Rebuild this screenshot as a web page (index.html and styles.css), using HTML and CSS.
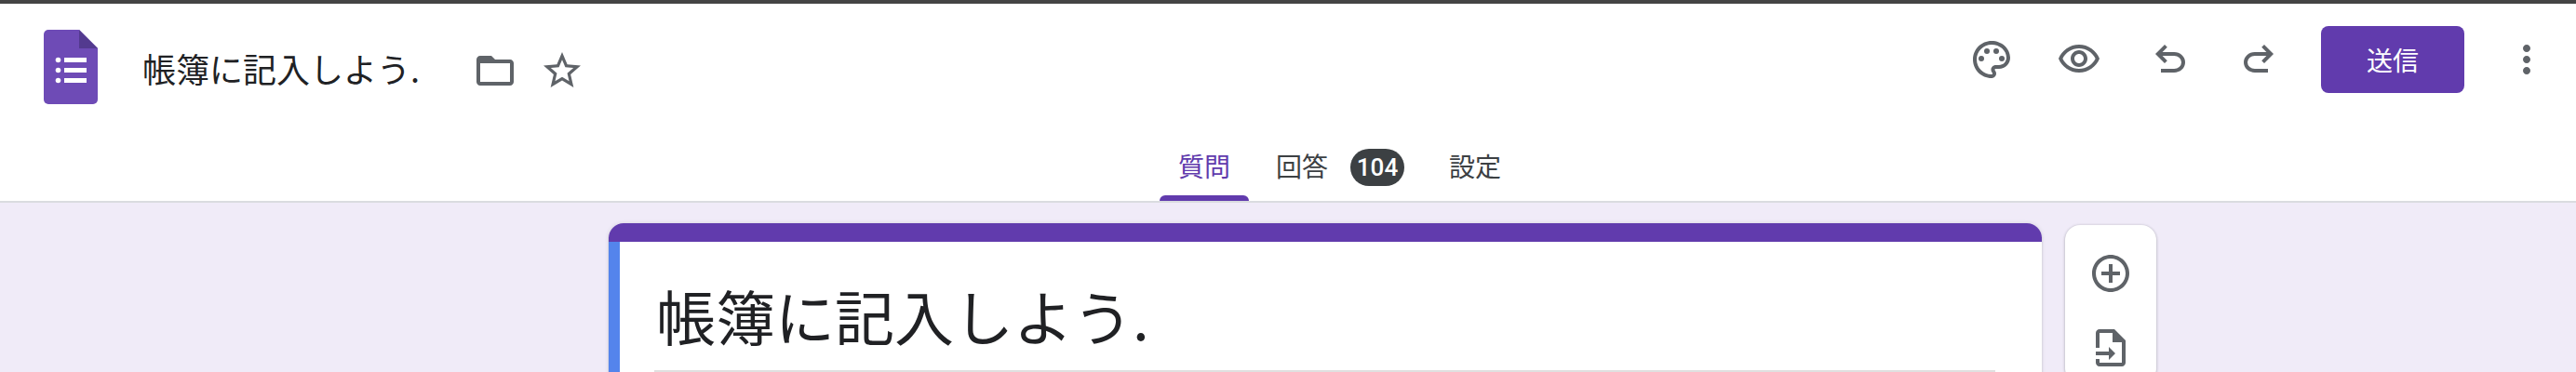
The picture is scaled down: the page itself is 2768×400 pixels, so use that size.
FILE: index.html
```html
<!DOCTYPE html>
<html lang="ja">
<head>
<meta charset="utf-8">
<title>帳簿に記入しよう.</title>
<link rel="stylesheet" href="styles.css">
</head>
<body>
<header class="header">
  <div class="topbar">
    <div class="left">
      <svg class="logo" viewBox="0 0 58 80" aria-hidden="true">
        <path class="logo-body" d="M5 0h33l20 20v55a5 5 0 0 1-5 5H5a5 5 0 0 1-5-5V5a5 5 0 0 1 5-5z"/>
        <path class="logo-fold" d="M38 0l20 20v0H38z"/>
        <path class="logo-list" d="M22 30h24v5H22zM22 41h24v5H22zM22 52h24v5H22z"/>
        <circle class="logo-list" cx="15.5" cy="32.5" r="2.8"/>
        <circle class="logo-list" cx="15.5" cy="43.5" r="2.8"/>
        <circle class="logo-list" cx="15.5" cy="54.5" r="2.8"/>
      </svg>
      <span class="doc-title">帳簿に記入しよう.</span>
      <svg class="icon folder" viewBox="0 0 24 24" aria-hidden="true"><path d="M20 6h-8l-2-2H4c-1.1 0-1.99.9-1.99 2L2 18c0 1.1.9 2 2 2h16c1.1 0 2-.9 2-2V8c0-1.1-.9-2-2-2zm0 12H4V8h16v10z"/></svg>
      <svg class="icon star" viewBox="0 0 24 24" aria-hidden="true"><path d="M22 9.24l-7.19-.62L12 2 9.19 8.63 2 9.24l5.46 4.73L5.82 21 12 17.27 18.18 21l-1.63-7.03L22 9.24zM12 15.4l-3.76 2.27 1-4.28-3.32-2.88 4.38-.38L12 6.1l1.71 4.04 4.38.38-3.32 2.88 1 4.28L12 15.4z"/></svg>
    </div>
    <div class="right">
      <svg class="icon" viewBox="0 0 24 24" aria-hidden="true"><path d="M12 22C6.49 22 2 17.51 2 12S6.49 2 12 2s10 4.04 10 9c0 3.31-2.69 6-6 6h-1.77c-.28 0-.5.22-.5.5 0 .12.05.23.13.33.41.47.64 1.06.64 1.67 0 1.38-1.12 2.5-2.5 2.5zm0-18c-4.41 0-8 3.59-8 8s3.59 8 8 8c.28 0 .5-.22.5-.5 0-.16-.08-.28-.14-.35-.41-.46-.63-1.05-.63-1.65 0-1.38 1.12-2.5 2.5-2.5H16c2.21 0 4-1.79 4-4 0-3.86-3.59-7-8-7z"/><circle cx="6.5" cy="11.5" r="1.5"/><circle cx="9.5" cy="7.5" r="1.5"/><circle cx="14.5" cy="7.5" r="1.5"/><circle cx="17.5" cy="11.5" r="1.5"/></svg>
      <svg class="icon eye" viewBox="0 0 24 24" aria-hidden="true"><path d="M12 6c3.79 0 7.17 2.13 8.82 5.5C19.17 14.87 15.79 17 12 17s-7.17-2.13-8.82-5.5C4.83 8.13 8.21 6 12 6m0-2C7 4 2.73 7.11 1 11.5 2.73 15.89 7 19 12 19s9.27-3.11 11-7.5C21.27 7.11 17 4 12 4zm0 5c1.38 0 2.5 1.12 2.5 2.5S13.38 14 12 14s-2.5-1.12-2.5-2.5S10.62 9 12 9m0-2c-2.48 0-4.5 2.02-4.5 4.5S9.52 16 12 16s4.5-2.02 4.5-4.5S14.48 7 12 7z"/></svg>
      <svg class="icon undo" viewBox="0 -960 960 960" aria-hidden="true"><path d="M280-200v-80h284q63 0 109.5-40T720-420q0-60-46.5-100T564-560H312l104 104-56 56-200-200 200-200 56 56-104 104h252q97 0 166.5 63T800-420q0 94-69.5 157T564-200H280Z"/></svg>
      <svg class="icon redo" viewBox="0 -960 960 960" aria-hidden="true"><path d="M396-200q-97 0-166.5-63T160-420q0-94 69.5-157T396-640h252L544-744l56-56 200 200-200 200-56-56 104-104H396q-63 0-109.5 40T240-420q0 60 46.5 100T396-280h284v80H396Z"/></svg>
      <div class="send">送信</div>
      <svg class="icon more" viewBox="0 0 24 24" aria-hidden="true"><path d="M12 8c1.1 0 2-.9 2-2s-.9-2-2-2-2 .9-2 2 .9 2 2 2zm0 2c-1.1 0-2 .9-2 2s.9 2 2 2 2-.9 2-2-.9-2-2-2zm0 6c-1.1 0-2 .9-2 2s.9 2 2 2 2-.9 2-2-.9-2-2-2z"/></svg>
    </div>
  </div>
  <nav class="tabs">
    <div class="tab tab-active">質問</div>
    <div class="tab tab-answers">回答<span class="badge">104</span></div>
    <div class="tab">設定</div>
  </nav>
</header>
<main class="main">
  <section class="card">
    <div class="card-accent"></div>
    <div class="card-body">
      <h1 class="form-title">帳簿に記入しよう.</h1>
    </div>
  </section>
  <aside class="toolbar">
    <svg class="icon" viewBox="0 0 24 24" aria-hidden="true"><path d="M13 7h-2v4H7v2h4v4h2v-4h4v-2h-4V7zm-1-5C6.48 2 2 6.48 2 12s4.48 10 10 10 10-4.48 10-10S17.52 2 12 2zm0 18c-4.41 0-8-3.59-8-8s3.59-8 8-8 8 3.59 8 8-3.59 8-8 8z"/></svg>
    <svg class="icon" viewBox="0 0 24 24" aria-hidden="true"><path d="M14 2H6c-1.1 0-2 .9-2 2v8h2V4h7v5h5v11H6v-2H4v2c0 1.1.9 2 2 2h12c1.1 0 2-.9 2-2V8l-6-6z"/><path d="M13 3h1l6 6H13z"/><path d="M4 14h7v-2.5l3.5 3.5-3.5 3.5V16H4z"/></svg>
  </aside>
</main>
</body>
</html>
```
FILE: styles.css
```css
* { box-sizing: border-box; }
html, body { margin: 0; height: 400px; overflow: hidden; }
body {
  background: #f0ebf8;
  font-family: "Noto Sans CJK JP", "Roboto", sans-serif;
  color: #202124;
}
.header {
  background: #fff;
  border-top: 4px solid #444;
  border-bottom: 2px solid #dadce0;
  height: 218px;
}
.topbar {
  display: flex;
  justify-content: space-between;
  align-items: flex-start;
  height: 146px;
  padding: 24px 29px 0 47px;
}
.left { display: flex; align-items: center; margin-top: 4px; }
.logo { width: 58px; height: 80px; flex: none; }
.logo-body { fill: #6e4bb6; }
.logo-fold { fill: #533a8f; }
.logo-list { fill: #fff; }
.doc-title {
  margin-left: 48px;
  padding-top: 2px;
  font-size: 36px;
  line-height: 78px;
  color: #202124;
  white-space: nowrap;
}
.icon { width: 48px; height: 48px; fill: #5f6368; flex: none; display: block; }
.folder { margin: 8px 0 0 57px; }
.star { margin: 8px 0 0 24px; }
.right { display: flex; align-items: center; height: 72px; }
.eye { margin-left: 46px; }
.undo { margin-left: 50px; }
.redo { margin-left: 47px; }
.more { margin-left: 43px; }
.send {
  margin-left: 43px;
  width: 154px;
  height: 72px;
  border-radius: 8px;
  background: #613bad;
  color: #fff;
  font-size: 28px;
  line-height: 72px;
  text-align: center;
}
.tabs {
  display: flex;
  justify-content: center;
  height: 66px;
  padding-left: 113px;
}
.tab {
  position: relative;
  display: flex;
  align-items: center;
  height: 66px;
  padding: 0 22px 10px;
  font-size: 28px;
  color: #3c4043;
  white-space: nowrap;
}
.tab-active {
  padding: 0 20px 10px;
  color: #613bad;
}
.tab-active::after {
  content: "";
  position: absolute;
  left: 0;
  right: 0;
  bottom: 0;
  height: 6px;
  border-radius: 6px 6px 0 0;
  background: #613bad;
}
.tab-answers { padding: 0 26px 10px 29px; }
.badge {
  width: 58px;
  height: 40px;
  margin: 4px 0 0 24px;
  border-radius: 20px;
  background: #3c4043;
  color: #fff;
  font-family: "Roboto", sans-serif;
  font-weight: 500;
  font-size: 26px;
  line-height: 40px;
  text-align: center;
}
.main {
  display: flex;
  align-items: flex-start;
  gap: 25px;
  height: 182px;
  padding: 22px 0 0 654px;
  overflow: hidden;
}
.card {
  width: 1540px;
  height: 170px;
  background: #fff;
  border-radius: 16px 16px 0 0;
  box-shadow: 0 2px 2px rgba(60, 64, 67, .2), 0 0 4px rgba(60, 64, 67, .15);
  overflow: hidden;
}
.card-accent { height: 20px; background: #613bad; }
.card-body {
  height: 150px;
  margin-right: 2px;
  padding: 0 48px 0 37px;
  border-left: 12px solid #5484ec;
}
.form-title {
  margin: 0;
  height: 140px;
  padding: 27px 0 0 2px;
  border-bottom: 2px solid #e0e0e0;
  font-size: 64px;
  font-weight: 400;
  line-height: 102px;
  color: #202124;
}
.toolbar {
  display: flex;
  flex-direction: column;
  align-items: center;
  gap: 32px;
  width: 98px;
  height: 170px;
  margin-top: 2px;
  padding-top: 28px;
  background: #fff;
  border-radius: 16px;
  box-shadow: 0 1px 3px rgba(60, 64, 67, .3), 0 0 3px rgba(60, 64, 67, .15);
}
```
